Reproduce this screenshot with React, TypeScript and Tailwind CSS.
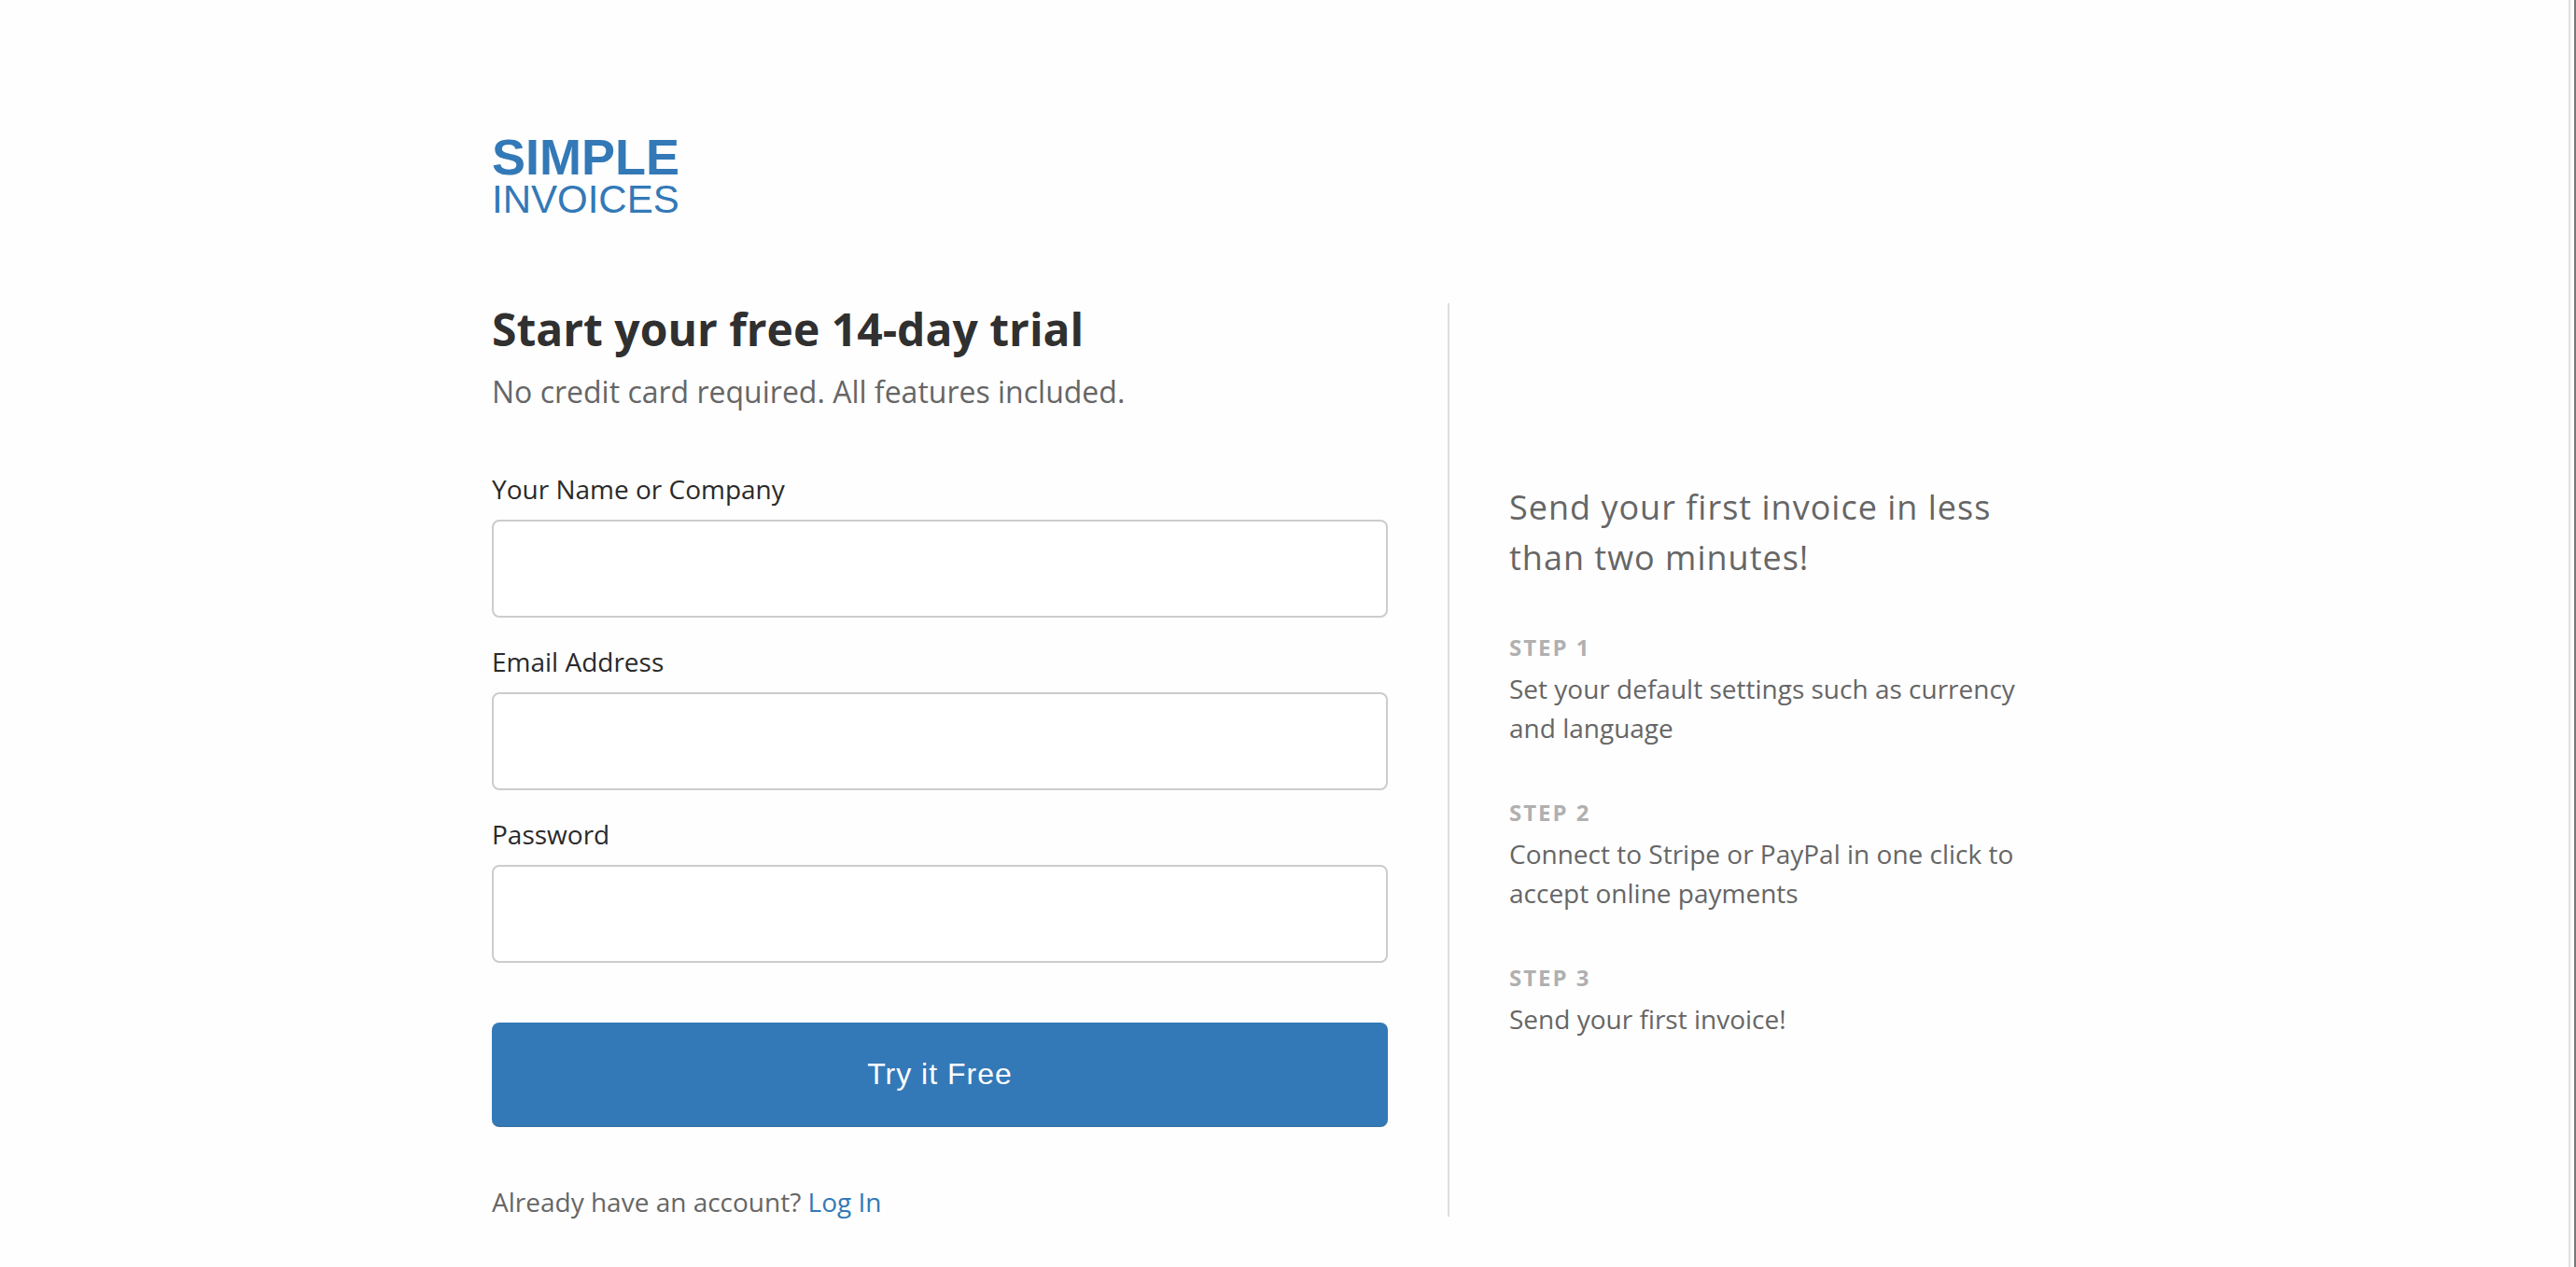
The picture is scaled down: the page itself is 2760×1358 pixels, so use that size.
import { useState, type FormEvent } from 'react';

const FIELDS = [
  { id: 'name', label: 'Your Name or Company', type: 'text', autoComplete: 'organization' },
  { id: 'email', label: 'Email Address', type: 'email', autoComplete: 'email' },
  { id: 'password', label: 'Password', type: 'password', autoComplete: 'new-password' }
];

const STEPS = [
  { title: 'Step 1', text: 'Set your default settings such as currency and language' },
  { title: 'Step 2', text: 'Connect to Stripe or PayPal in one click to accept online payments' },
  { title: 'Step 3', text: 'Send your first invoice!' }
];

function Logo() {
  return (
    <a
      href="#"
      className="inline-flex flex-col font-['Liberation_Sans',Arial,sans-serif] text-[#3379b7]"
    >
      <span className="text-[54px] leading-[46px] font-bold">SIMPLE</span>
      <span className="text-[42px] leading-[46px]">INVOICES</span>
    </a>
  );
}

function SignupForm() {
  const [values, setValues] = useState<Record<string, string>>({ name: '', email: '', password: '' });

  function handleSubmit(e: FormEvent) {
    e.preventDefault();
  }

  return (
    <form onSubmit={handleSubmit} className="mt-[59px]">
      <div className="flex flex-col gap-[26px]">
        {FIELDS.map(field => (
          <div key={field.id} className="flex flex-col gap-3">
            <label htmlFor={field.id} className="text-[28px] leading-[42px] text-[#2a2a2a]">
              {field.label}
            </label>
            <input
              id={field.id}
              type={field.type}
              autoComplete={field.autoComplete}
              value={values[field.id]}
              onChange={e => setValues({ ...values, [field.id]: e.target.value })}
              className="h-[105px] w-full rounded-lg border-2 border-[#cccccc] bg-white px-6 text-[28px] outline-none focus:border-[#3379b7]"
            />
          </div>
        ))}
      </div>
      <button
        type="submit"
        className="mt-16 h-28 w-full rounded-lg border-b-2 border-[#3873a8] bg-[#3379b7] font-['Liberation_Sans',Arial,sans-serif] text-[32px] tracking-[1px] text-white"
      >
        Try it Free
      </button>
    </form>
  );
}

export default function App() {
  return (
    <div className="flex min-h-screen bg-[#fefefe] font-['Open_Sans',sans-serif] text-[#666666]">
      <div className="min-w-0 flex-1 px-8">
        <div className="mx-auto max-w-[1698px] pt-[145px]">
          <header className="flex">
            <Logo />
          </header>

          <div className="mt-[88px] flex">
            <main className="min-w-0 flex-1 border-r-2 border-[#dddddd] pr-16">
              <h1 className="text-[48px] leading-14 font-bold text-[#303030]">
                Start your free 14-day trial
              </h1>
              <p className="mt-[15px] text-[32px] leading-12">
                No credit card required. All features included.
              </p>
              <SignupForm />
              <p className="mt-16 text-[28px] leading-8">
                Already have an account?{' '}
                <a href="#" className="text-[#3379b7] hover:underline">Log In</a>
              </p>
            </main>

            <aside className="flex w-[672px] flex-col justify-center pr-8 pl-16">
              <h2 className="text-[36px] leading-[54px] tracking-[1px]">
                Send your first invoice in less than two minutes!
              </h2>
              <ol className="mt-[46px] flex flex-col gap-[47px]">
                {STEPS.map(step => (
                  <li key={step.title}>
                    <h3 className="text-[24px] leading-[46px] font-bold tracking-[2px] text-[#b0b0b0] uppercase">
                      {step.title}
                    </h3>
                    <p className="text-[28px] leading-[42px]">{step.text}</p>
                  </li>
                ))}
              </ol>
            </aside>
          </div>
        </div>
      </div>

      {/* Window edge */}
      <div className="w-2 border-r-2 border-l-2 border-r-[#777777] border-l-[#e0e0e0] bg-[#fafafa]" />
    </div>
  );
}
